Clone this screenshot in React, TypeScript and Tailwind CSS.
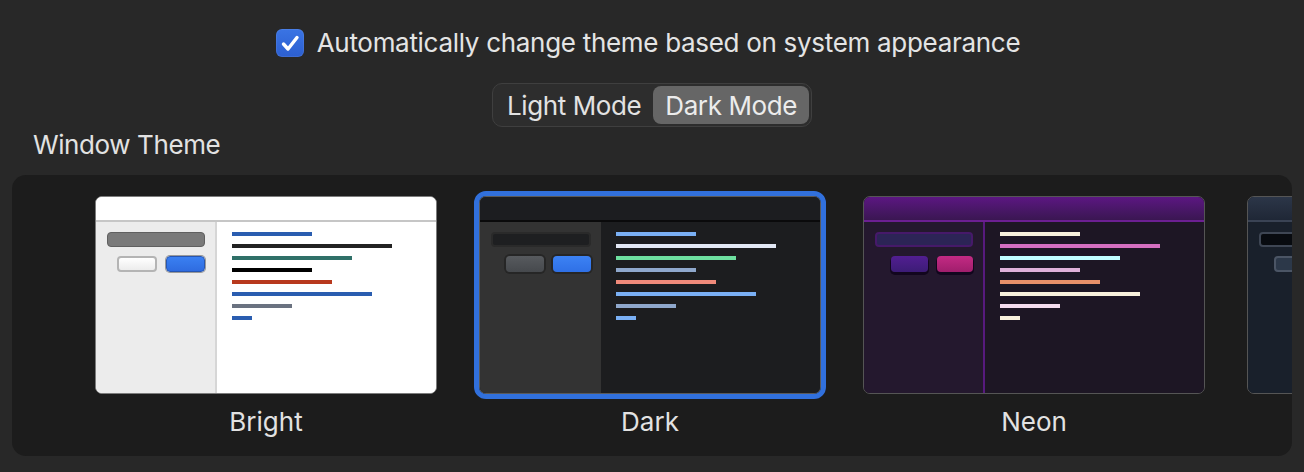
import React from "react";

type Theme = {
  name: string;
  selected?: boolean;
  card: string;
  title: string;
  sidebar: string;
  content: string;
  input: string;
  btn1: string;
  btn2: string;
  lines: string[];
};

const widths = ["w-[80px]", "w-[160px]", "w-[120px]", "w-[80px]", "w-[100px]", "w-[140px]", "w-[60px]", "w-[20px]"];

const themes: Theme[] = [
  {
    name: "Bright",
    card: "border-[1.5px] border-[#7c7c7c] bg-white",
    title: "bg-white border-b-2 border-[#c6c6c6]",
    sidebar: "bg-[#ececec] border-r-2 border-[#d6d6d6]",
    content: "bg-white",
    input: "bg-[#7a7a7a] border border-[#606060]",
    btn1: "w-[40px] bg-gradient-to-b from-white to-[#ececec] border-2 border-[#b4b4b4]",
    btn2: "w-[39px] bg-gradient-to-b from-[#3a80f2] to-[#2f6ce0] border-[1.5px] border-[#2856b0] shadow-[0_0_0_1px_#9a9a9a]",
    lines: ["bg-[#2a5db0]", "bg-[#222222]", "bg-[#2f7068]", "bg-[#000000]", "bg-[#b8391e]", "bg-[#2a5db0]", "bg-[#6a7280]", "bg-[#2a5db0]"],
  },
  {
    name: "Dark",
    selected: true,
    card: "border border-[#5a5a5a] bg-[#1c1d1f]",
    title: "bg-[#1c1d20] border-b-2 border-[#0a0a0b]",
    sidebar: "bg-[#333333]",
    content: "bg-[#1c1d1f]",
    input: "bg-[#1e1f21] border-2 border-[#2a2a2a]",
    btn1: "w-[38px] bg-gradient-to-b from-[#575a5e] to-[#46494d] shadow-[0_0_0_2px_#262626]",
    btn2: "w-[38px] bg-gradient-to-b from-[#3c82f4] to-[#2f70e6] shadow-[0_0_0_2px_#262626]",
    lines: ["bg-[#7ab0f5]", "bg-[#e2e8f5]", "bg-[#6ee0a0]", "bg-[#8fa8cc]", "bg-[#f08a7a]", "bg-[#7ab0f5]", "bg-[#8fa8cc]", "bg-[#7ab0f5]"],
  },
  {
    name: "Neon",
    card: "border-[1.5px] border-[#555555] bg-[#1d1624]",
    title: "bg-gradient-to-b from-[#5c1682] to-[#3a1652] border-b-2 border-[#6c1f92]",
    sidebar: "bg-[#24182e] border-r-2 border-[#571a7e]",
    content: "bg-[#1d1624]",
    input: "bg-[#2c2456] border-2 border-[#46196a]",
    btn1: "w-[37px] bg-gradient-to-b from-[#521e92] to-[#3c1c76] shadow-[0_2px_0_1px_#12061e]",
    btn2: "w-[36px] bg-gradient-to-b from-[#c42a84] to-[#a01e6c] shadow-[0_2px_0_1px_#12061e]",
    lines: ["bg-[#f8f0dc]", "bg-[#d46fc0]", "bg-[#c0ffff]", "bg-[#e0b0d8]", "bg-[#e8906a]", "bg-[#f8f0dc]", "bg-[#f5dcee]", "bg-[#f8f0dc]"],
  },
  {
    name: "",
    card: "border-[1.5px] border-[#555555] bg-[#19202b]",
    title: "bg-gradient-to-b from-[#2c3648] to-[#1f2736] border-b-2 border-[#3a4354]",
    sidebar: "bg-[#19202b]",
    content: "bg-[#19202b]",
    input: "bg-[#080b10] border-2 border-[#3e4654]",
    btn1: "w-[38px] bg-[#2c3849] border-2 border-[#4b5565]",
    btn2: "w-[38px] bg-[#2c3849] border-2 border-[#4b5565]",
    lines: ["bg-[#7ab0f5]", "bg-[#e2e8f5]", "bg-[#6ee0a0]", "bg-[#8fa8cc]", "bg-[#f08a7a]", "bg-[#7ab0f5]", "bg-[#8fa8cc]", "bg-[#7ab0f5]"],
  },
];

function Card({ t }: { t: Theme }) {
  return (
    <div className="flex flex-col items-center w-[342px] shrink-0">
      <div
        className={`w-[342px] h-[198px] rounded-[7px] overflow-hidden flex flex-col ${t.card} ${
          t.selected ? "outline-[5px] outline-solid outline-[#3170dc]" : ""
        }`}
      >
        <div className={`h-[25px] shrink-0 ${t.title}`} />
        <div className="flex flex-1">
          <div className={`w-[121px] shrink-0 pl-[11px] pr-[10px] pt-[10px] flex flex-col ${t.sidebar}`}>
            <div className={`h-[15px] rounded-[4px] ${t.input}`} />
            <div className="flex justify-end gap-[9px] mt-[9px]">
              <div className={`h-[16px] rounded-[4px] ${t.btn1}`} />
              <div className={`h-[16px] rounded-[4px] ${t.btn2}`} />
            </div>
          </div>
          <div className={`flex-1 pl-[15px] pt-[10px] flex flex-col gap-[8px] ${t.content}`}>
            {t.lines.map((c, i) => (
              <div key={i} className={`h-[4px] ${widths[i]} ${c}`} />
            ))}
          </div>
        </div>
      </div>
      <div className="mt-[13px] h-[30px] leading-[30px] text-[26px] text-[#e2e2e2]">{t.name}</div>
    </div>
  );
}

export default function App() {
  return (
    <div
      className="w-[1304px] h-[472px] bg-[#282828] overflow-hidden flex flex-col"
      style={{ fontFamily: "Inter, 'Noto Sans', sans-serif" }}
    >
      <div className="flex flex-col items-center pt-[28px]">
        <div className="flex items-center gap-[13px] pr-[8px]">
          <div className="w-[28px] h-[28px] rounded-[6px] bg-gradient-to-b from-[#3a74e4] to-[#2c5fd0] flex items-center justify-center shadow-[inset_0_0_0_1px_rgba(255,255,255,0.08)]">
            <svg width="28" height="28" viewBox="0 0 28 28" fill="none">
              <path d="M7.5 15 L12 20 L21 8.5" stroke="white" strokeWidth="3.4" strokeLinecap="round" strokeLinejoin="round" />
            </svg>
          </div>
          <span className="text-[26px] leading-[30px] text-[#e4e4e4] tracking-[-0.3px]">
            Automatically change theme based on system appearance
          </span>
        </div>
        <div className="mt-[25px] h-[44px] flex items-center rounded-[10px] border border-[#3f3f3f] bg-[#2d2d2d] p-[2px]">
          <div className="h-full px-[12px] flex items-center text-[26px] text-[#e2e2e2] tracking-[-0.4px]">Light Mode</div>
          <div className="h-full px-[12px] flex items-center rounded-[8px] bg-[#666666] text-[26px] text-[#ececec] tracking-[-0.4px]">
            Dark Mode
          </div>
        </div>
      </div>
      <div className="mt-[3px] pl-[33px] text-[26px] leading-[30px] text-[#e2e2e2] tracking-[-0.4px]">Window Theme</div>
      <div className="mx-[12px] mt-[15px] h-[281px] rounded-[14px] bg-[#1c1c1c] overflow-hidden">
        <div className="flex gap-[42px] pl-[83px] pt-[21px]">
          {themes.map((t, i) => (
            <Card key={i} t={t} />
          ))}
        </div>
      </div>
    </div>
  );
}
